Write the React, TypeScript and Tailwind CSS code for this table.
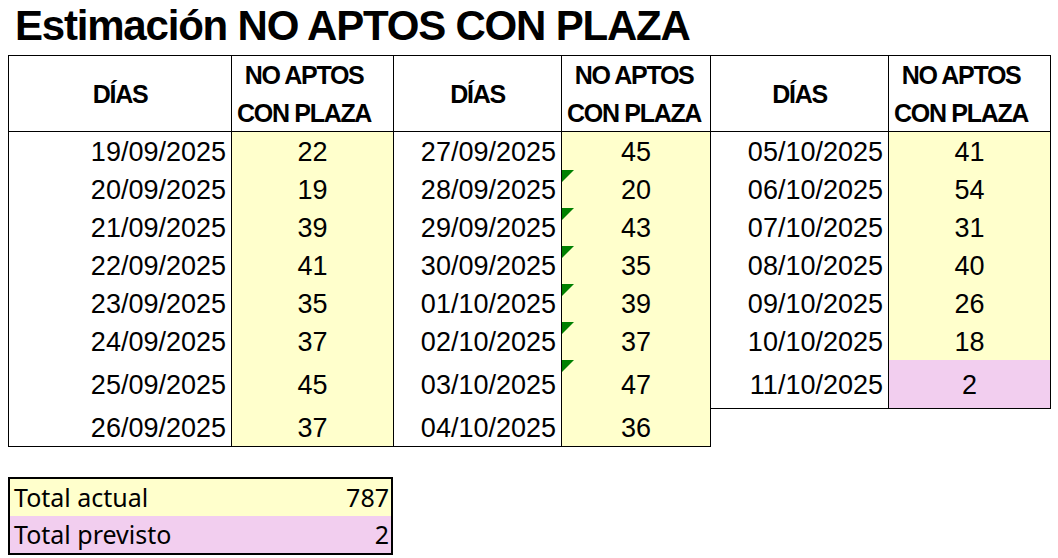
const block1: [string, number][] = [
  ["19/09/2025", 22],
  ["20/09/2025", 19],
  ["21/09/2025", 39],
  ["22/09/2025", 41],
  ["23/09/2025", 35],
  ["24/09/2025", 37],
  ["25/09/2025", 45],
  ["26/09/2025", 37],
];

const block2: [string, number][] = [
  ["27/09/2025", 45],
  ["28/09/2025", 20],
  ["29/09/2025", 43],
  ["30/09/2025", 35],
  ["01/10/2025", 39],
  ["02/10/2025", 37],
  ["03/10/2025", 47],
  ["04/10/2025", 36],
];

const block3: [string, number][] = [
  ["05/10/2025", 41],
  ["06/10/2025", 54],
  ["07/10/2025", 31],
  ["08/10/2025", 40],
  ["09/10/2025", 26],
  ["10/10/2025", 18],
  ["11/10/2025", 2],
];

const rowH = (i: number) => (i === 6 ? "h-[48px]" : "h-[38px]");

function Header({ dateW, valW }: { dateW: string; valW: string }) {
  return (
    <div className="flex h-[76px] border-b border-black font-bold text-[25px] tracking-[-1.3px] font-['Liberation_Sans',sans-serif]">
      <div className={`${dateW} flex items-center justify-center pt-[3px] border-r border-black`}>DÍAS</div>
      <div className={`${valW} flex items-center pl-[5px] border-r border-black`}>
        <div className="inline-block text-center leading-[38px]">
          NO APTOS
          <br />
          CON PLAZA
        </div>
      </div>
    </div>
  );
}

function Block({
  rows,
  dateW,
  valW,
  marks,
  className,
}: {
  rows: [string, number][];
  dateW: string;
  valW: string;
  marks?: boolean;
  className: string;
}) {
  return (
    <div className={`flex flex-col border-black ${className}`}>
      <Header dateW={dateW} valW={valW} />
      {rows.map(([d, n], i) => {
        const pink = d === "11/10/2025";
        return (
          <div key={d} className={`flex ${rowH(i)} text-[27px] font-['Liberation_Sans',sans-serif]`}>
            <div className={`${dateW} flex items-center justify-end pt-[3px] pr-[5px] border-r border-black`}>{d}</div>
            <div
              className={`${valW} relative flex items-center justify-center pt-[3px] border-r border-black ${
                pink ? "bg-[#f2ceef]" : "bg-[#ffffcc]"
              }`}
            >
              {marks && i >= 1 && i <= 6 && (
                <div className="absolute left-0 top-0 w-[12px] h-[12px] bg-[#008000] [clip-path:polygon(0_0,100%_0,0_100%)]" />
              )}
              {n}
            </div>
          </div>
        );
      })}
    </div>
  );
}

export default function App() {
  return (
    <div className="w-[1058px] h-[558px] bg-white text-black overflow-hidden">
      <div className="h-[55px] pl-[15px] text-[42px] leading-[51px] font-bold tracking-[-1.2px] font-['Liberation_Sans',sans-serif]">
        Estimación NO APTOS CON PLAZA
      </div>
      <div className="flex items-start pl-[8px]">
        <Block rows={block1} dateW="w-[223px]" valW="w-[162px]" className="border-l border-t border-b" />
        <Block rows={block2} dateW="w-[168px]" valW="w-[149px]" marks className="border-t border-b" />
        <Block rows={block3} dateW="w-[178px]" valW="w-[162px]" className="border-t border-b" />
      </div>
      <div className="mt-[30px] ml-[8px] w-[385px] border-2 border-black text-[25px] font-['Noto_Sans',sans-serif]">
        <div className="h-[37px] flex items-center justify-between pl-[4px] pr-[2px] bg-[#ffffcc]">
          <span>Total actual</span>
          <span>787</span>
        </div>
        <div className="h-[37px] flex items-center justify-between pl-[4px] pr-[2px] bg-[#f2ceef]">
          <span>Total previsto</span>
          <span>2</span>
        </div>
      </div>
    </div>
  );
}
